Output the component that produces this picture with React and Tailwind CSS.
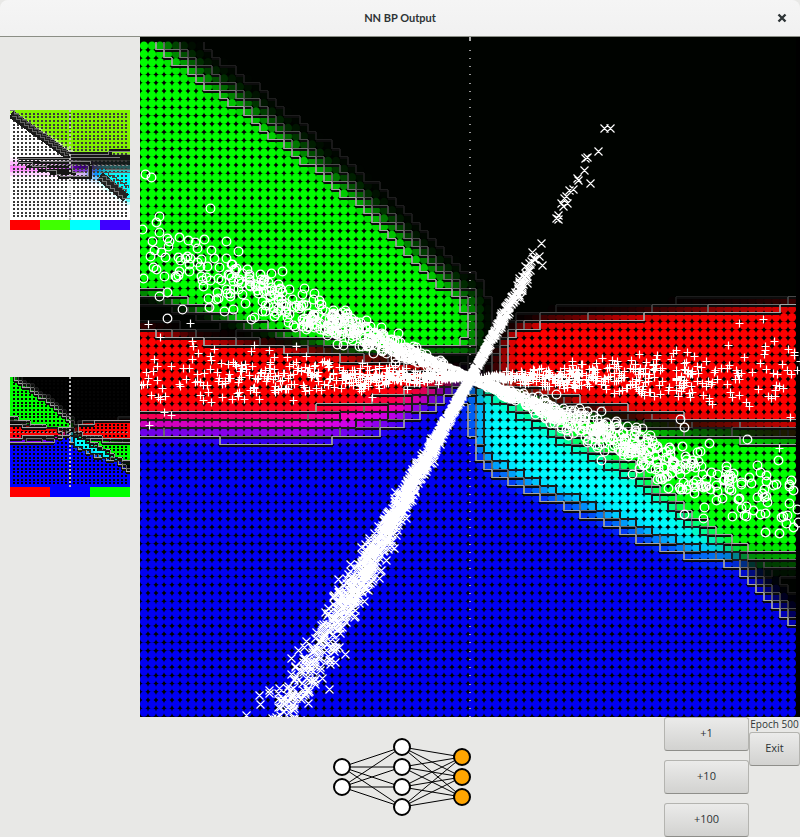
import React from "react";

const sig = (v) => 1 / (1 + Math.exp(-v));
const clamp = (v) => Math.max(0, Math.min(1, v));

// Piecewise linear interpolation through a list of [x, y] points.
function lerp(points, x) {
  if (x <= points[0][0]) return points[0][1];
  for (let i = 1; i < points.length; i++) {
    if (x <= points[i][0]) {
      const [x0, y0] = points[i - 1];
      const [x1, y1] = points[i];
      return y0 + ((x - x0) / (x1 - x0)) * (y1 - y0);
    }
  }
  return points[points.length - 1][1];
}

// Decision boundaries of the output layer, in plot coordinates (660 x 680).
const EDGE = {
  greenTop: [[0, -16], [24, 6], [64, 39], [104, 66], [153, 106], [218, 159], [260, 197], [290, 229], [325, 258]],
  greenBottom: [[0, 255], [24, 260], [50, 269], [80, 279], [120, 290], [170, 303], [210, 311], [330, 313]],
  redTopLeft: [[0, 291], [60, 301], [160, 312], [220, 321], [300, 331], [330, 336]],
  redBottomLeft: [[0, 394], [120, 397], [160, 399], [220, 393], [260, 382], [290, 365], [320, 348]],
  blueTop: [[0, 382], [160, 380], [210, 373], [260, 365], [290, 355], [320, 347], [330, 347], [360, 360], [400, 383], [420, 397], [488, 433], [553, 485], [590, 511], [610, 533], [660, 588]],
  greenTopRight: [[330, 346], [380, 358], [420, 373], [460, 384], [500, 391], [560, 397], [660, 403]],
  greenBottomRight: [[330, 395], [340, 416], [353, 430], [408, 457], [448, 472], [488, 490], [520, 504], [560, 517], [660, 523]],
  redTopRight: [[350, 324], [360, 306], [375, 291], [405, 283], [440, 281], [520, 275], [620, 269], [660, 267]],
  redBottomRight: [[330, 343], [380, 350], [440, 366], [496, 377], [560, 385], [660, 391]],
};

function outputField(x, y) {
  const left = sig((333 - x) / 5);
  const gUL = sig((y - lerp(EDGE.greenTop, x)) / 7) * sig((lerp(EDGE.greenBottom, x) - y) / 2.6) * left;
  const gLR = sig((y - lerp(EDGE.greenTopRight, x)) / 3) * sig((lerp(EDGE.greenBottomRight, x) - y) / 5) * sig((x - 335) / 6);
  const rL = sig((y - lerp(EDGE.redTopLeft, x)) / 2.2) * sig((lerp(EDGE.redBottomLeft, x) - y) / 5) * sig((312 - x) / 12);
  const rR = sig((y - lerp(EDGE.redTopRight, x)) / 2.6) * sig((lerp(EDGE.redBottomRight, x) - y) / 2.6) * sig((x - 362) / 5);
  const bw = x < 320 ? 4.5 : 5.5;
  const b = sig((y - lerp(EDGE.blueTop, x)) / bw);
  return [clamp(rL + rR), clamp(gUL + gLR), b];
}

// Responses of the hidden layer, in thumbnail coordinates (120 x 110).
function hiddenField(x, y) {
  const edge = x < 66 ? 2 + x * 0.64 : 45;
  const above = sig((edge - y) / 1.4);
  const magenta = Math.exp(-(((y - 58) / 6) ** 2)) * sig((62 - x) / 8);
  const purple = Math.exp(-(((y - 57) / 6) ** 2) - ((x - 70) / 15) ** 2);
  const cyan = sig((x - 88) / 2) * sig((y - 56) / 3) * sig((70 + (x - 90) * 0.75 - y) / 2);
  const dark = sig((x - 62) / 6) * sig((y - 46) / 2) * sig((58 - y) / 2);
  const blueish = Math.exp(-(((y - 64) / 6) ** 2) - ((x - 85) / 7) ** 2);
  let r = 1 - 0.5 * purple - cyan - 0.7 * blueish;
  let g = 1 - 0.5 * magenta - 0.95 * purple - 0.35 * blueish;
  let b = 1;
  const keep = 1 - dark;
  r = clamp(r) * keep;
  g = clamp(g) * keep;
  b *= keep;
  return [r * (1 - above) + 0.5 * above, g * (1 - above) + 0.95 * above, b * (1 - above)];
}

const rgb = (c) => `rgb(${c.map((v) => Math.round(clamp(v) * 255)).join(",")})`;

const LEVELS = [0.02, 0.2, 0.5, 0.82];
const SHADES = ["#1d1d1d", "#484848", "#6e6e6e", "#a4a4a4"];

// Where two classes respond together, small differences between them are not contoured.
function describe(c) {
  const sorted = [...c].sort((p, q) => q - p);
  const conf = sorted[0] - sorted[1];
  const level = sorted[1] > 0.3 && conf < 0.2 ? 0 : LEVELS.filter((l) => conf > l).length;
  return { level, top: c.indexOf(sorted[0]), max: sorted[0] };
}

function buildGrid(field, cols, rows, dx, dy, y0, scaleX, scaleY) {
  const cells = [];
  for (let j = 0; j < rows; j++) {
    for (let i = 0; i < cols; i++) {
      const cx = dx * (i + 0.5);
      const cy = y0 + dy * (j + 0.5);
      const color = field(cx * scaleX, cy * scaleY);
      cells.push({ cx, cy, color, ...describe(color) });
    }
  }
  const lines = { v: SHADES.map(() => ""), h: SHADES.map(() => ""), mixed: "" };
  const compare = (a, b, key, d) => {
    if (a.level !== b.level) {
      if (Math.min(a.level, b.level) === 0 && Math.min(a.max, b.max) > 0.4) lines.mixed += d;
      else lines[key][Math.max(a.level, b.level) - 1] += d;
    } else if (a.top !== b.top && a.level > 0 && a.max > 0.25 && b.max > 0.25) lines.mixed += d;
  };
  for (let j = 0; j < rows; j++) {
    for (let i = 0; i < cols; i++) {
      const a = cells[j * cols + i];
      const x1 = dx * (i + 1);
      const yTop = y0 + dy * j;
      if (i + 1 < cols) compare(a, cells[j * cols + i + 1], "v", `M${x1} ${Math.round(yTop)}V${Math.round(yTop + dy)}`);
      if (j + 1 < rows) compare(a, cells[(j + 1) * cols + i], "h", `M${dx * i} ${Math.round(yTop + dy)}H${x1}`);
    }
  }
  return { cells, lines };
}

function createRandom(seed) {
  let s = seed;
  const next = () => {
    s = (s + 0x6d2b79f5) | 0;
    let t = Math.imul(s ^ (s >>> 15), 1 | s);
    t = (t + Math.imul(t ^ (t >>> 7), 61 | t)) ^ t;
    return ((t ^ (t >>> 14)) >>> 0) / 4294967296;
  };
  const gauss = () => Math.sqrt(-2 * Math.log(next() + 1e-9)) * Math.cos(2 * Math.PI * next());
  return { next, gauss };
}

const ring = (x, y) => `M${x - 4.3} ${y}a4.3 4.3 0 1 0 8.6 0a4.3 4.3 0 1 0 -8.6 0`;
const plus = (x, y) => `M${x - 4} ${y}h8M${x} ${y - 4}v8`;
const cross = (x, y) => `M${x - 4} ${y - 4}l8 8M${x - 4} ${y + 4}l8 -8`;
const at = (v) => Math.round(v) + 0.5;

function buildSamples() {
  const { gauss } = createRandom(20);
  let rings = "";
  let pluses = "";
  let crosses = "";
  for (let i = 0; i < 1100; i++) {
    const d = gauss() * 180;
    const y = 341 + d * 0.41 + gauss() * Math.abs(d) * 0.066;
    const x = 330 + d;
    if (x > 0 && x < 658) rings += ring(at(x), at(y));
  }
  for (let i = 0; i < 900; i++) {
    const d = gauss() * 185;
    const y = 340 + gauss() * Math.abs(d) * 0.062;
    const x = 330 + d;
    if (x > 0 && x < 660) pluses += plus(at(x), at(y));
  }
  for (let i = 0; i < 1600; i++) {
    const t = Math.abs(gauss()) * 175;
    const x = 330 - t * 0.55 + gauss() * t * 0.036;
    crosses += cross(at(x), at(341 + t));
  }
  for (let i = 0; i < 330; i++) {
    const t = Math.abs(gauss()) * 66;
    if (t < 132) crosses += cross(at(330 + t * 0.54 + gauss() * t * 0.025), at(341 - t));
  }
  [[464, 91], [470, 91], [458, 114], [447, 120], [445, 121], [444, 133], [450, 146], [437, 141], [438, 143], [433, 152], [429, 153], [426, 159], [424, 161], [427, 166], [421, 166], [423, 169], [418, 178], [418, 182], [416, 181], [402, 228], [401, 206], [119, 658], [129, 653], [106, 678], [120, 667]].forEach(([x, y]) => {
    crosses += cross(x + 0.5, y + 0.5);
  });
  [[50, 286], [31, 378], [20, 300], [623, 282], [639, 411]].forEach(([x, y]) => {
    pluses += plus(x + 0.5, y + 0.5);
  });
  [[5, 137], [11, 140], [70, 171], [19, 259], [544, 390], [544, 477], [658, 485]].forEach(([x, y]) => {
    rings += ring(x + 0.5, y + 0.5);
  });
  return { rings, pluses, crosses };
}

const MAIN = buildGrid(outputField, 82, 82, 8, 8.23, 4.6, 1, 1);
const HIDDEN = buildGrid(hiddenField, 30, 30, 4, 11 / 3, 0, 1, 1);
const OUTPUT = buildGrid(outputField, 30, 30, 4, 11 / 3, 0, 656 / 120, 680 / 110);
const SAMPLES = buildSamples();

function Contours({ lines, thick, thin }) {
  return (
    <g fill="none">
      <path d={lines.mixed} stroke="#1c1c1c" strokeWidth={thick} />
      {SHADES.map((shade, i) => (
        <g key={shade}>
          <path d={lines.h[i]} stroke="#0c0c0c" strokeWidth={thick} transform="translate(0 1)" />
          <path d={lines.h[i]} stroke={shade} strokeWidth={thin} transform="translate(0 -0.5)" />
          <path d={lines.v[i]} stroke={shade} strokeWidth={thick} opacity="0.85" />
        </g>
      ))}
    </g>
  );
}

function MainPlot() {
  const ticks = Array.from({ length: 82 }, (_, i) => `M329 ${Math.round(12.8 + i * 8.23)}h2`).join("");
  return (
    <svg viewBox="0 0 660 680" className="block h-auto w-full bg-black" role="img" aria-label="Network output">
      <rect width="656" height="680" fill="#000300" />
      {MAIN.cells.map((c, i) =>
        c.max > 0.015 ? (
          <ellipse key={i} cx={c.cx} cy={c.cy} rx="4.1" ry="4.3" fill={rgb([c.color[0], c.color[1], c.color[2] * (0.95 + 0.05 * c.color[1])])} />
        ) : null
      )}
      <rect x="656" width="4" height="680" fill="#000" />
      <Contours lines={MAIN.lines} thick={2} thin={1} />
      <path d="M330 0v4" stroke="#aaa" strokeWidth="2" />
      <path d={ticks} stroke="#999" strokeWidth="1" transform="translate(0 0.5)" />
      <g fill="none" stroke="#fff">
        <path d={SAMPLES.rings} strokeWidth="1.3" />
        <path d={SAMPLES.pluses} strokeWidth="1.2" />
        <path d={SAMPLES.crosses} strokeWidth="1.1" />
      </g>
    </svg>
  );
}

const GRID_COLS = Array.from({ length: 29 }, (_, i) => 4 + i * 4);
const GRID_ROWS = Array.from({ length: 29 }, (_, i) => Math.round(((i + 1) * 11) / 3));

function Thumbnail({ grid, keys, dot, label, children }) {
  const w = 120 / keys.length;
  return (
    <svg viewBox="0 0 120 120" className="block h-auto w-full" role="img" aria-label={label} shapeRendering="crispEdges">
      {grid.cells.map((c, i) => (
        <rect key={i} x={c.cx - 2} y={c.cy - 11 / 6} width="4" height="4" fill={rgb(c.color)} />
      ))}
      <path
        d={GRID_ROWS.map((y) => GRID_COLS.map((x) => `M${x - 1} ${y}h2`).join("")).join("")}
        stroke={dot}
        strokeWidth="2"
      />
      {children}
      <path d="M60 0V110" stroke="#bbb" strokeWidth="2" strokeDasharray="2 2" />
      <path d="M0 55H120" stroke="#aaa" strokeWidth="1" strokeDasharray="2 2" opacity="0.7" />
      {keys.map((k, i) => (
        <rect key={k} x={i * w} y="110" width={w} height="10" fill={k} />
      ))}
    </svg>
  );
}

function stairs(x0, y0, x1, y1, step) {
  const n = Math.round((x1 - x0) / step);
  let d = `M${x0} ${y0}`;
  for (let i = 1; i <= n; i++) d += `H${x0 + i * step}V${Math.round(y0 + ((y1 - y0) * i) / n)}`;
  return d;
}

function HiddenContours() {
  return (
    <g fill="none">
      <path d="M1 4L59 46" stroke="#1c1c1c" strokeWidth="8" />
      <path d={stairs(0, 0, 60, 44, 4)} stroke="#777" />
      <path d={stairs(2, 6, 58, 48, 4)} stroke="#666" />
      <path d={stairs(4, 4, 60, 46, 4)} stroke="#4a4a4a" />
      <path d="M8 48H120M8 52H80M16 56H60M28 60H62M40 63H66M48 67H80V52M60 43H100V40H120M58 46H120" stroke="#151515" strokeWidth="3" />
      <path d="M8 48H60V44H98V41H120M8 48V52H22V56H36V60H46V64H50V66H78V56M60 47H110M30 51H80V54M62 54V62H74" stroke="#808080" />
      <path d="M90 66L116 88" stroke="#222" strokeWidth="9" />
      <path d={stairs(88, 68, 112, 88, 4) + "H120"} stroke="#777" />
      <path d={stairs(92, 66, 116, 82, 4) + "M90 62H120M96 59H120"} stroke="#666" />
      <path d={stairs(94, 62, 118, 78, 4)} stroke="#444" />
    </g>
  );
}

// Wider dark casing under the light contour, so that it stays readable at thumbnail size.
function OutputContours() {
  const { lines } = OUTPUT;
  return (
    <g>
      <path d={lines.h.join("") + lines.v.join("") + lines.mixed} fill="none" stroke="#161616" strokeWidth="2" />
      <Contours lines={lines} thick={1} thin={1} />
    </g>
  );
}

const LAYERS = [
  { x: 22, ys: [50, 70], fill: "#fff" },
  { x: 82, ys: [30, 50, 70, 90], fill: "#fff" },
  { x: 142, ys: [40, 60, 80], fill: "#ffa500" },
];

function NetworkDiagram() {
  return (
    <svg width="160" height="120" viewBox="0 0 160 120" className="block" role="img" aria-label="Network topology">
      {LAYERS.slice(1).map((layer, i) =>
        LAYERS[i].ys.map((a) =>
          layer.ys.map((b) => (
            <line key={`${i}-${a}-${b}`} x1={LAYERS[i].x} y1={a} x2={layer.x} y2={b} stroke="#000" strokeWidth="1" />
          ))
        )
      )}
      {LAYERS.map((l) => l.ys.map((y) => <circle key={`${l.x}-${y}`} cx={l.x} cy={y} r="8" fill={l.fill} stroke="#000" strokeWidth="2" />))}
    </svg>
  );
}

function Button({ children }) {
  return (
    <button
      type="button"
      className="flex h-[34px] w-full items-center justify-center rounded-[3px] border border-[#b4b4b0] border-b-[#8e8e8a] bg-linear-to-b from-[#ebebea] to-[#d2d2d0] pb-[2px] text-[11px] leading-4 text-[#2e3436]"
    >
      {children}
    </button>
  );
}

export default function App() {
  return (
    <div className="bg-[#e8e8e6] font-['Open_Sans','Noto_Sans',sans-serif] text-[#2e3436]">
      <header className="grid h-[37px] grid-cols-[36px_1fr_36px] items-center rounded-t-lg border-b border-[#8b8e85] bg-linear-to-b from-[#f5f5f5] to-[#f1f1f1]">
        <h1 className="col-start-2 text-center font-['Lato','Open_Sans',sans-serif] text-[11px] leading-4 font-bold">NN BP Output</h1>
        <button type="button" aria-label="Close" className="flex h-8 items-center justify-center">
          <svg width="10" height="10" viewBox="0 0 10 10" className="block" aria-hidden="true">
            <path d="M1.5 1.5l7 7M8.5 1.5l-7 7" stroke="#2e3436" strokeWidth="2.4" />
          </svg>
        </button>
      </header>
      <main className="flex">
        <aside className="flex w-[140px] shrink-0 flex-col gap-[147px] px-[10px] pt-[73px]">
          <Thumbnail grid={HIDDEN} keys={["#ff0000", "#40ff00", "#00ffff", "#4000ff"]} dot="#3a3a3a" label="Hidden layer">
            <HiddenContours />
          </Thumbnail>
          <Thumbnail grid={OUTPUT} keys={["#ff0000", "#0000ff", "#00ff00"]} dot="#050505" label="Output layer">
            <OutputContours />
          </Thumbnail>
        </aside>
        <section className="min-w-0 flex-1">
          <MainPlot />
        </section>
      </main>
      <footer className="grid grid-cols-[1fr_auto_1fr]">
        <div className="col-start-2">
          <NetworkDiagram />
        </div>
        <div className="flex items-start justify-end">
          <div className="flex w-[85px] flex-col gap-[9px]">
            <Button>+1</Button>
            <Button>+10</Button>
            <Button>+100</Button>
          </div>
          <div className="w-[51px]">
            <p className="text-center text-[10px] leading-[15px] whitespace-nowrap">Epoch 500</p>
            <Button>Exit</Button>
          </div>
        </div>
      </footer>
    </div>
  );
}
